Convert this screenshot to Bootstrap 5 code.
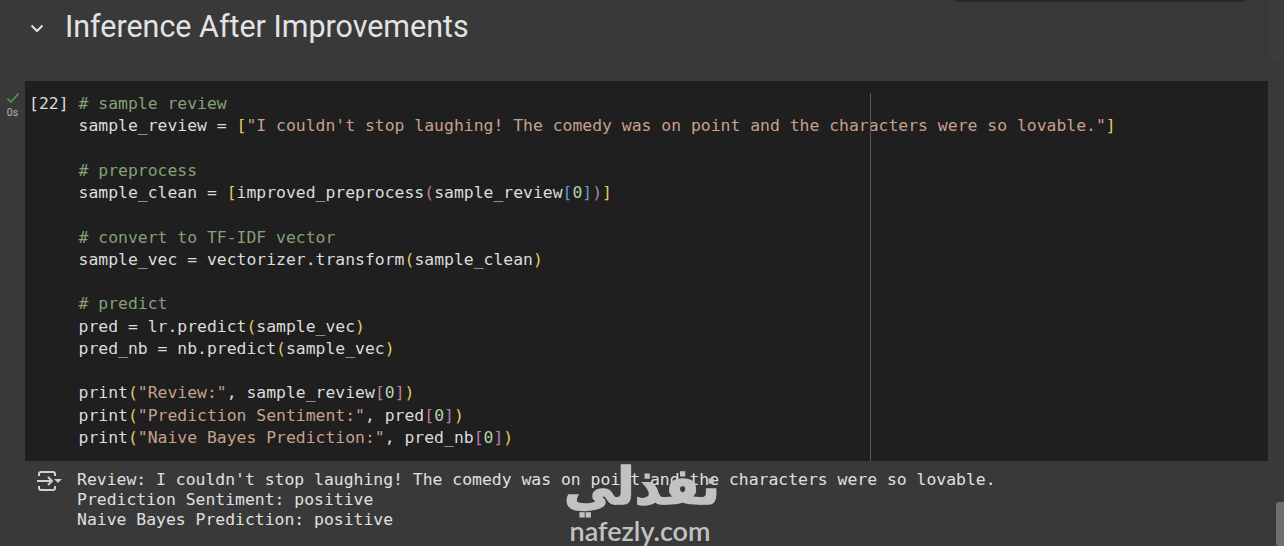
<!DOCTYPE html>
<html lang="en">
<head>
<meta charset="utf-8">
<title>Inference After Improvements</title>
<link href="https://cdn.jsdelivr.net/npm/bootstrap@5.3.0/dist/css/bootstrap.min.css" rel="stylesheet">
<style>
html,body{height:546px;overflow:hidden;background:#393939;}
.nb-page{position:relative;height:546px;overflow:hidden;background:#393939;}
.nb-topline{height:2px;width:290px;margin-left:955px;background:#2a2a2a;}
.nb-head{height:79px;padding-left:28px;padding-bottom:28px;gap:19px;}
.nb-title{font:400 30.45px/1 Roboto,sans-serif;color:#e3e3e3;margin:0;}
.nb-cell{height:380px;}
.nb-gutter{width:25px;padding-top:11px;}
.nb-zero{font:400 10.500px/1 Roboto,sans-serif;color:#b5b5b5;margin-top:4px;}
.nb-code{position:relative;width:1243px;background:#1f1f1f;padding:12px 0 0 4px;gap:10px;}
.nb-num{font:400 16.41px/22.27px "DejaVu Sans Mono",monospace;color:#dcdcdc;}
.nb-pre{margin:0;font:400 16.41px/22.27px "DejaVu Sans Mono",monospace;color:#dcdcdc;overflow:visible;}
.nb-rule{position:absolute;left:845px;top:12px;bottom:0;width:1px;background:#5a5a5a;}
.c-com{color:#86a077;}.c-str{color:#c9a08c;}.c-b1{color:#e3cb5a;}.c-b2{color:#b77fae;}.c-b3{color:#5b9bd5;}.c-num{color:#b5cea8;}
.nb-out{padding:9px 0 0 36px;gap:15px;}
.nb-outtext{margin:0;font:400 16.41px/20.2px "DejaVu Sans Mono",monospace;color:#e0e0e0;overflow:visible;}
.nb-scroll{position:absolute;right:0;top:502px;width:8px;height:44px;background:#6e6e6e;border-radius:3px 0 0 3px;}
.nb-side{position:absolute;right:0;top:0;width:14px;height:62px;background:#3c3c3c;}
.nb-mark{position:absolute;left:562px;top:459px;width:160px;color:#c2c2c2;text-align:center;}
.nb-ar{font:700 51px/56px "DejaVu Sans",sans-serif;direction:rtl;height:60px;-webkit-text-stroke:1.500px #c2c2c2;}
.nb-en{font:600 27px/24px Lato,sans-serif;margin-left:-4px;}
</style>
</head>
<body>
<div class="nb-page">
  <div class="nb-side"></div>
  <div class="nb-topline"></div>
  <div class="nb-head d-flex align-items-center">
    <svg width="18" height="18" viewBox="0 0 18 18" fill="none" stroke="#e0e0e0" stroke-width="2"><path d="M3.500 6.500 9 12l5.500-5.500"/></svg>
    <h1 class="nb-title">Inference After Improvements</h1>
  </div>
  <div class="nb-cell d-flex">
    <div class="nb-gutter d-flex flex-column align-items-center">
      <svg width="14" height="12" viewBox="0 0 14 12" fill="none" stroke="#5c9a5c" stroke-width="1.500"><path d="M1.500 6.500 5 10l7.500-8.500"/></svg>
      <div class="nb-zero">0s</div>
    </div>
    <div class="nb-code d-flex">
      <div class="nb-num">[22]</div>
<pre class="nb-pre"><span class="c-com"># sample review</span>
sample_review = <span class="c-b1">[</span><span class="c-str">"I couldn't stop laughing! The comedy was on point and the characters were so lovable."</span><span class="c-b1">]</span>

<span class="c-com"># preprocess</span>
sample_clean = <span class="c-b1">[</span>improved_preprocess<span class="c-b2">(</span>sample_review<span class="c-b3">[</span><span class="c-num">0</span><span class="c-b3">]</span><span class="c-b2">)</span><span class="c-b1">]</span>

<span class="c-com"># convert to TF-IDF vector</span>
sample_vec = vectorizer.transform<span class="c-b1">(</span>sample_clean<span class="c-b1">)</span>

<span class="c-com"># predict</span>
pred = lr.predict<span class="c-b1">(</span>sample_vec<span class="c-b1">)</span>
pred_nb = nb.predict<span class="c-b1">(</span>sample_vec<span class="c-b1">)</span>

print<span class="c-b1">(</span><span class="c-str">"Review:"</span>, sample_review<span class="c-b2">[</span><span class="c-num">0</span><span class="c-b2">]</span><span class="c-b1">)</span>
print<span class="c-b1">(</span><span class="c-str">"Prediction Sentiment:"</span>, pred<span class="c-b2">[</span><span class="c-num">0</span><span class="c-b2">]</span><span class="c-b1">)</span>
print<span class="c-b1">(</span><span class="c-str">"Naive Bayes Prediction:"</span>, pred_nb<span class="c-b2">[</span><span class="c-num">0</span><span class="c-b2">]</span><span class="c-b1">)</span></pre>
      <div class="nb-rule"></div>
    </div>
  </div>
  <div class="nb-out d-flex">
    <svg width="26" height="22" viewBox="0 0 26 22" fill="none" stroke="#d0d0d0" stroke-width="2" class="flex-shrink-0"><path d="M3 6V4Q3 2 5 2H17Q19 2 19 4V6M3 16v2q0 2 2 2H17q2 0 2-2v-2M1 11h15M12 7l4 4-4 4"/><path d="M18 9h8l-4 4z" fill="#d0d0d0" stroke="none"/></svg>
<pre class="nb-outtext">Review: I couldn't stop laughing! The comedy was on point and the characters were so lovable.
Prediction Sentiment: positive
Naive Bayes Prediction: positive</pre>
  </div>
  <div class="nb-scroll"></div>
  <div class="nb-mark">
    <div class="nb-ar">نفذلي</div>
    <div class="nb-en">nafezly.com</div>
  </div>
</div>
<script src="https://cdn.jsdelivr.net/npm/bootstrap@5.3.0/dist/js/bootstrap.bundle.min.js"></script>
</body>
</html>
